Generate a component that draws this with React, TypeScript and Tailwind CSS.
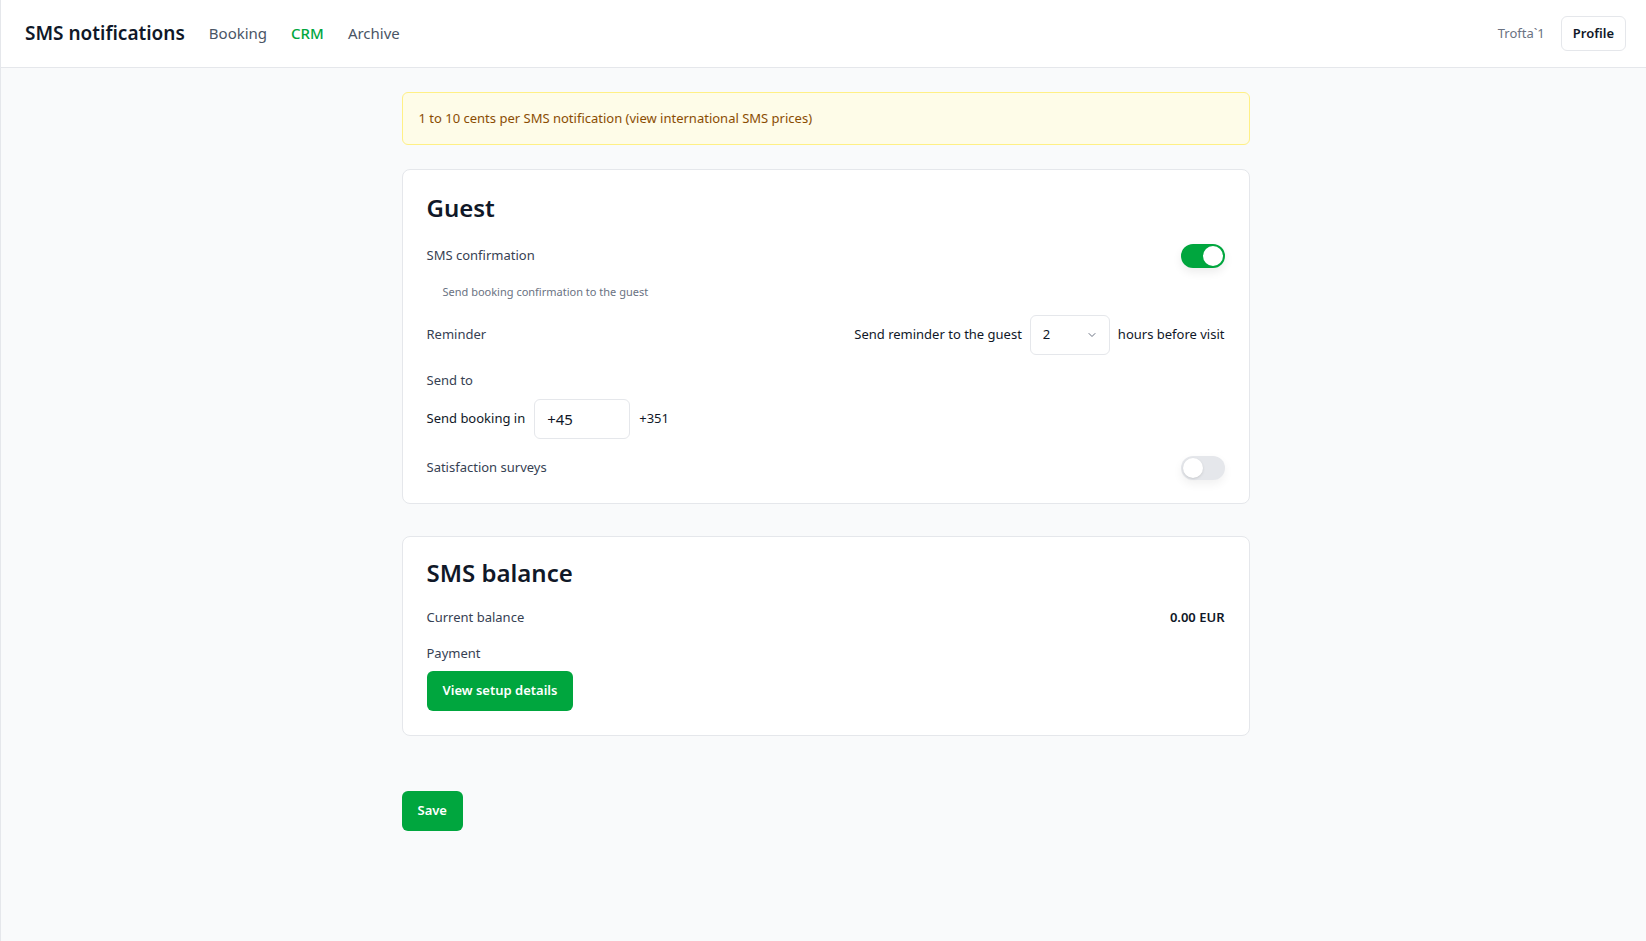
import React, { useState } from 'react';
import { ChevronDown } from 'lucide-react';

const Toggle: React.FC<{ on: boolean; onChange: (v: boolean) => void }> = ({ on, onChange }) => (
  <button
    onClick={() => onChange(!on)}
    className={
      on
        ? 'relative flex h-6 w-11 items-center rounded-full bg-green-600 shadow-[0_4px_10px_rgba(0,0,0,0.08)]'
        : 'relative flex h-6 w-11 items-center rounded-full bg-gray-200 shadow-[0_4px_10px_rgba(0,0,0,0.06)]'
    }
  >
    <span
      className={
        on
          ? 'absolute left-[22px] h-5 w-5 rounded-full bg-white'
          : 'absolute left-[2px] h-5 w-5 rounded-full bg-white shadow-sm'
      }
    />
  </button>
);

export default function App() {
  const [confirm, setConfirm] = useState(true);
  const [surveys, setSurveys] = useState(false);
  const [hours, setHours] = useState('2');

  return (
    <div className="min-h-[941px] border-l border-gray-200 bg-gray-50 font-['Noto_Sans',_'Open_Sans',_sans-serif] text-gray-900">
      <header className="flex h-[68px] items-center justify-between border-b border-gray-200 bg-white pl-6 pr-5">
        <div className="flex items-center">
          <h1 className="text-[19px] font-semibold text-gray-900">SMS notifications</h1>
          <nav className="ml-6 flex items-center gap-6 text-[15px] text-gray-600">
            <a>Booking</a>
            <a className="font-medium text-green-600">CRM</a>
            <a>Archive</a>
          </nav>
        </div>
        <div className="flex items-center gap-4 text-sm">
          <span className="text-[13px] text-gray-500">Trofta`1</span>
          <button className="h-[35px] rounded-md border border-gray-200 bg-white px-[11px] text-[13px] font-semibold text-gray-900">
            Profile
          </button>
        </div>
      </header>

      <main className="mx-auto w-[848px] translate-x-[2px] pt-6">
        <div className="flex h-[53px] items-center rounded-md border border-yellow-200 bg-yellow-50 px-4 text-[13px] text-yellow-800">
          1 to 10 cents per SMS notification (view international SMS prices)
        </div>

        <section className="mt-6 rounded-lg border border-gray-200 bg-white px-6 pt-[22px] pb-[23px]">
          <h2 className="text-2xl font-semibold">Guest</h2>

          <div className="mt-5 flex items-center justify-between text-[13px] text-gray-700">
            <span>SMS confirmation</span>
            <Toggle on={confirm} onChange={setConfirm} />
          </div>
          <p className="mt-4 pl-4 text-[11px] text-gray-500">Send booking confirmation to the guest</p>

          <div className="mt-[14px] flex items-center justify-between text-[13px]">
            <span className="text-gray-700">Reminder</span>
            <div className="flex items-center gap-2 text-gray-900">
              <span>Send reminder to the guest</span>
              <div className="relative">
                <select
                  value={hours}
                  onChange={(e) => setHours(e.target.value)}
                  className="h-10 w-20 appearance-none rounded-md border border-gray-200 bg-white pl-3 text-[13px] outline-none"
                >
                  {['1', '2', '3', '6', '12', '24'].map((h) => (
                    <option key={h}>{h}</option>
                  ))}
                </select>
                <ChevronDown className="pointer-events-none absolute right-3 top-3.5 h-3 w-3 text-gray-500" />
              </div>
              <span>hours before visit</span>
            </div>
          </div>

          <p className="mt-4 text-[13px] text-gray-700">Send to</p>
          <div className="mt-[9px] flex items-center gap-[9px] text-[13px] text-gray-900">
            <span>Send booking in</span>
            <input
              defaultValue="+45"
              className="h-10 w-[96px] rounded-md border border-gray-200 px-3 text-[15px] outline-none"
            />
            <span>+351</span>
          </div>

          <div className="mt-[17px] flex items-center justify-between text-[13px] text-gray-700">
            <span>Satisfaction surveys</span>
            <Toggle on={surveys} onChange={setSurveys} />
          </div>
        </section>

        <section className="mt-8 rounded-lg border border-gray-200 bg-white px-6 pt-5 pb-6">
          <h2 className="text-2xl font-semibold">SMS balance</h2>
          <div className="mt-[19px] flex items-center justify-between text-[13px]">
            <span className="text-gray-700">Current balance</span>
            <span className="font-semibold text-gray-900">0.00 EUR</span>
          </div>
          <p className="mt-4 text-[13px] text-gray-700">Payment</p>
          <button className="mt-2 h-10 rounded-md bg-green-600 px-4 text-[13px] font-semibold text-white">
            View setup details
          </button>
        </section>

        <button className="mt-[55px] h-10 rounded-md bg-green-600 px-4 text-[13px] font-semibold text-white">
          Save
        </button>
      </main>
    </div>
  );
}
